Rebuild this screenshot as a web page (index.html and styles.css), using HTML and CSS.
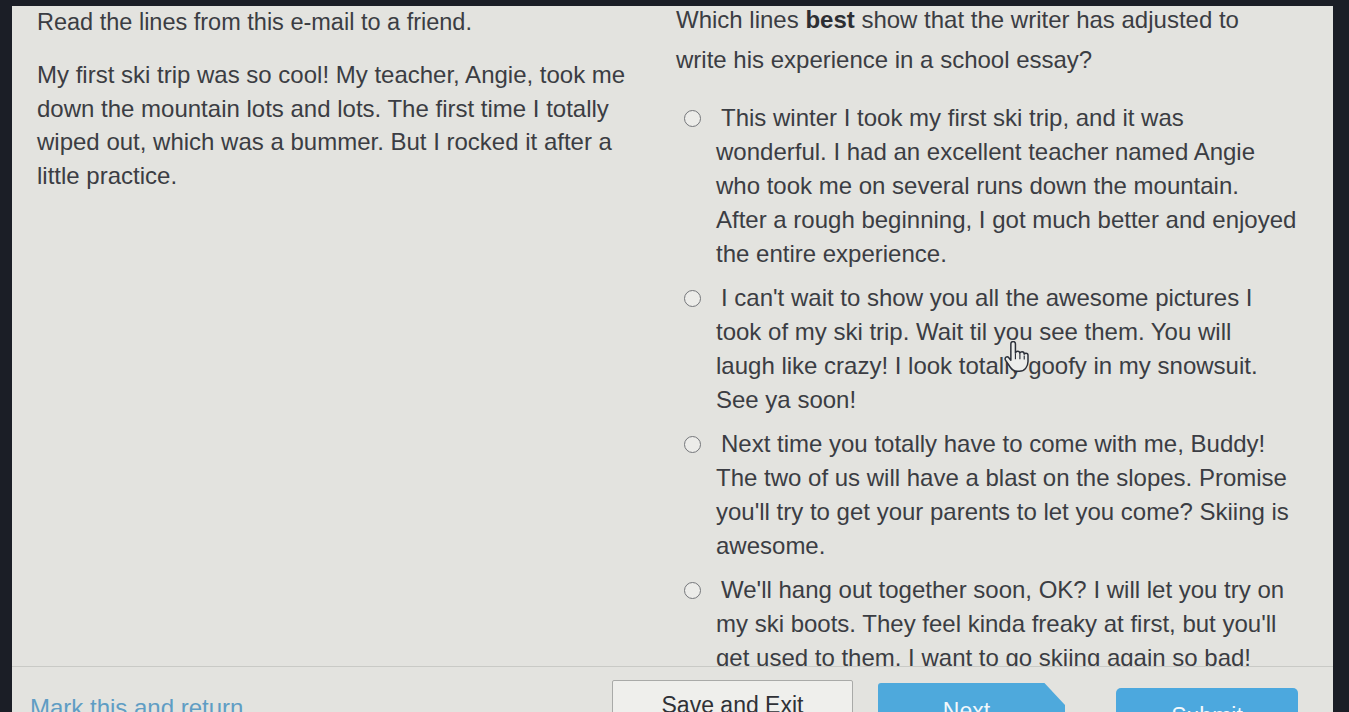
FILE: index.html
```html
<!DOCTYPE html>
<html lang="en">
<head>
<meta charset="utf-8">
<title>Question</title>
<link rel="stylesheet" href="styles.css">
</head>
<body>
<div class="screen">
  <div class="content">
    <div class="col passage">
      <p class="prompt">Read the lines from this e-mail to a friend.</p>
      <p class="passage-text">My first ski trip was so cool! My teacher, Angie, took me<br>down the mountain lots and lots. The first time I totally<br>wiped out, which was a bummer. But I rocked it after a<br>little practice.</p>
    </div>
    <div class="col question">
      <p class="question-text">Which lines <b>best</b> show that the writer has adjusted to<br>write his experience in a school essay?</p>
      <ul class="options">
        <li class="opt"><span class="radio"></span>This winter I took my first ski trip, and it was<br>wonderful. I had an excellent teacher named Angie<br>who took me on several runs down the mountain.<br>After a rough beginning, I got much better and enjoyed<br>the entire experience.</li>
        <li class="opt"><span class="radio"></span>I can't wait to show you all the awesome pictures I<br>took of my ski trip. Wait til you see them. You will<br>laugh like crazy! I look totally goofy in my snowsuit.<br>See ya soon!</li>
        <li class="opt"><span class="radio"></span>Next time you totally have to come with me, Buddy!<br>The two of us will have a blast on the slopes. Promise<br>you'll try to get your parents to let you come? Skiing is<br>awesome.</li>
        <li class="opt"><span class="radio"></span>We'll hang out together soon, OK? I will let you try on<br>my ski boots. They feel kinda freaky at first, but you'll<br>get used to them. I want to go skiing again so bad!</li>
      </ul>
    </div>
  </div>
  <div class="footer">
    <a class="mark" href="#">Mark this and return</a>
    <button class="btn save">Save and Exit</button>
    <button class="btn next">Next</button>
    <button class="btn submit">Submit</button>
  </div>
  <svg class="cursor" width="26" height="32" viewBox="0 0 22 28" aria-hidden="true">
    <path d="M6.5 2.5c0-1.1 0.9-2 2-2s2 0.9 2 2v8c0.3-1 1.1-1.5 2-1.5 1.1 0 1.8 0.8 1.9 1.8 0.3-0.8 1-1.3 1.9-1.3 1.1 0 1.9 0.9 1.9 2 0.3-0.5 0.9-0.8 1.5-0.8 1 0 1.8 0.8 1.8 1.8v5.5c0 4.5-3 8.5-7.5 8.5h-2c-2.6 0-4.5-1.3-6-3.5l-4.2-6.3c-0.6-0.9-0.3-2 0.5-2.5 0.8-0.5 1.8-0.3 2.4 0.4l1.8 2.2z" fill="#ecedeb" stroke="#2b2f38" stroke-width="1.3" stroke-linejoin="round"/>
    <path d="M10.5 11v5M14.4 11.3v4.7M18.2 12.6v3.6" fill="none" stroke="#2b2f38" stroke-width="1"/>
  </svg>
</div>
</body>
</html>
```
FILE: styles.css
```css
html, body {
  margin: 0;
  padding: 0;
  height: 100%;
  overflow: hidden;
}
body {
  background: #1b1e26;
  font-family: "Liberation Sans", Arial, sans-serif;
}
.screen {
  position: relative;
  margin: 6px 0 0 12px;
  width: 1321px;
  height: 720px;
  background: #e3e3df;
  overflow: hidden;
}
.content {
  display: grid;
  grid-template-columns: 639px 1fr;
  padding-left: 25px;
  height: 660px;
  overflow: hidden;
  border-bottom: 1px solid #c9cac6;
  color: #3b3d43;
  font-size: 24px;
}
.col p {
  margin: 0;
}
.prompt {
  margin-top: -1px !important;
  line-height: 34px;
  font-size: 23.5px;
  white-space: nowrap;
}
.passage-text {
  margin-top: 19px !important;
  line-height: 33.5px;
  white-space: nowrap;
}
.question-text {
  margin-top: -6px !important;
  line-height: 40px;
  white-space: nowrap;
}
.question-text b {
  font-weight: bold;
  color: #2c2e33;
}
.options {
  list-style: none;
  margin: 21px 0 0 0;
  padding: 0 0 0 40px;
}
.opt {
  line-height: 34px;
  white-space: nowrap;
  margin-top: 10px;
}
.opt:first-child {
  margin-top: 0;
}
.radio {
  display: inline-block;
  box-sizing: border-box;
  width: 17px;
  height: 17px;
  margin-left: -32px;
  margin-right: 20px;
  border: 1.5px solid #74767a;
  border-radius: 50%;
  background: #ecece9;
  vertical-align: -1px;
}
.footer {
  display: flex;
  align-items: flex-start;
  padding-left: 18px;
  height: 60px;
}
.mark {
  width: 582px;
  margin-top: 27px;
  color: #5f9dc4;
  font-size: 24px;
  text-decoration: none;
  line-height: 28px;
}
.btn {
  font-family: "Liberation Sans", Arial, sans-serif;
  font-size: 23px;
  padding: 0;
  border: none;
  height: 50px;
  line-height: 48px;
  cursor: pointer;
}
.save {
  width: 241px;
  margin-top: 13px;
  background: #efefec;
  border: 1px solid #a9aaa8;
  color: #2f3136;
  border-radius: 2px;
}
.next {
  width: 187px;
  margin-left: 25px;
  margin-top: 16px;
  padding-right: 10px;
  background: #4ea9dc;
  color: #f3f8fb;
  clip-path: polygon(0 0, 89% 0, 100% 44%, 100% 100%, 0 100%);
  border-radius: 3px 0 0 0;
  line-height: 56px;
}
.submit {
  width: 182px;
  margin-left: 51px;
  margin-top: 21px;
  background: #4ca8de;
  color: #f3f8fb;
  border-radius: 5px 5px 0 0;
  line-height: 56px;
}
.cursor {
  position: absolute;
  left: 991px;
  top: 335px;
}
```
